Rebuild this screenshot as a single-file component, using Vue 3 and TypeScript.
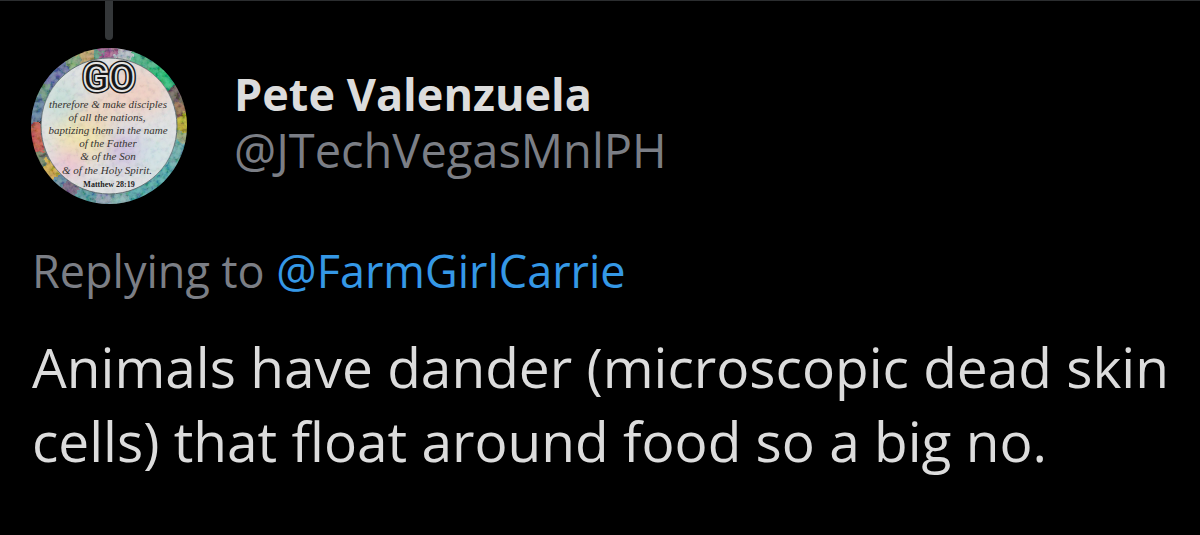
<script setup lang="ts">
interface Segment {
  from: number
  to: number
  color: string
}
interface Verse {
  y: number
  x: number
  text: string
}

const author = { name: 'Pete Valenzuela', handle: '@JTechVegasMnlPH' }
const replyTo = '@FarmGirlCarrie'
const body = 'Animals have dander (microscopic dead skin cells) that float around food so a big no.'

// Border colours of the avatar, in degrees clockwise from the top.
const segments: Segment[] = [
  { from: 0, to: 6, color: '#a9658f' },
  { from: 6, to: 18, color: '#aeb6bd' },
  { from: 18, to: 36, color: '#35a876' },
  { from: 36, to: 58, color: '#12b86c' },
  { from: 58, to: 72, color: '#65584e' },
  { from: 72, to: 82, color: '#8a6440' },
  { from: 82, to: 94, color: '#b5aa1d' },
  { from: 94, to: 104, color: '#8a9b6c' },
  { from: 104, to: 124, color: '#5aa3a3' },
  { from: 124, to: 165, color: '#3fa0a2' },
  { from: 165, to: 178, color: '#77aaa9' },
  { from: 178, to: 190, color: '#8297a9' },
  { from: 190, to: 206, color: '#4b9197' },
  { from: 206, to: 218, color: '#6b5876' },
  { from: 218, to: 226, color: '#5a8599' },
  { from: 226, to: 240, color: '#c9a438' },
  { from: 240, to: 250, color: '#6a785a' },
  { from: 250, to: 270, color: '#c24c3a' },
  { from: 270, to: 292, color: '#4f7294' },
  { from: 292, to: 303, color: '#5c8b76' },
  { from: 303, to: 325, color: '#5a679a' },
  { from: 325, to: 336, color: '#76a070' },
  { from: 336, to: 348, color: '#b8985c' },
  { from: 348, to: 354, color: '#4f9678' },
  { from: 354, to: 360, color: '#9d4e84' },
]

const verses: Verse[] = [
  { x: 77, y: 60, text: 'therefore & make disciples' },
  { x: 76, y: 73, text: 'of all the nations,' },
  { x: 77, y: 86, text: 'baptizing them in the name' },
  { x: 77, y: 99, text: 'of the Father' },
  { x: 77, y: 112, text: '& of the Son' },
  { x: 76, y: 126, text: '& of the Holy Spirit.' },
]
</script>

<template>
  <article class="post">
    <div class="thread" aria-hidden="true"></div>
    <header class="author">
      <a class="avatar" href="#" aria-label="Pete Valenzuela profile">
        <svg viewBox="0 0 156 156" role="img" aria-label="Matthew 28:19 verse">
          <defs>
            <clipPath id="disc"><circle cx="78" cy="78" r="78" /></clipPath>
            <filter id="rough" x="-10%" y="-10%" width="120%" height="120%">
              <feTurbulence type="fractalNoise" baseFrequency="0.14" numOctaves="3" seed="4" result="n" />
              <feDisplacementMap in="SourceGraphic" in2="n" scale="14" xChannelSelector="R" yChannelSelector="G" />
            </filter>
            <filter id="grain" x="0" y="0" width="100%" height="100%">
              <feTurbulence type="fractalNoise" baseFrequency="0.2" numOctaves="3" seed="9" />
              <feColorMatrix values="2.6 .6 0 0 -1.1  1.6 1.6 0 0 -1.1  1.6 .6 1 0 -1.1  0 0 0 0 1" />
            </filter>
            <filter id="wash"><feGaussianBlur stdDeviation="9" /></filter>
            <clipPath id="paper"><circle cx="78" cy="78" r="68" /></clipPath>
          </defs>
          <g clip-path="url(#disc)">
            <g filter="url(#rough)">
              <circle
                v-for="s in segments"
                :key="s.from"
                cx="78"
                cy="78"
                r="75"
                fill="none"
                stroke-width="26"
                :stroke="s.color"
                pathLength="360"
                :stroke-dasharray="`${s.to - s.from + 1} ${359 - s.to + s.from}`"
                :stroke-dashoffset="-s.from"
                transform="rotate(-90 78 78)"
              />
            </g>
            <rect width="156" height="156" filter="url(#grain)" opacity=".22" />
            <circle cx="78" cy="78" r="68" fill="#dfe1e2" stroke="#606e72" stroke-width="1" />
            <g clip-path="url(#paper)">
              <g filter="url(#wash)">
                <ellipse cx="104" cy="44" rx="34" ry="24" fill="#efd0c4" />
                <ellipse cx="52" cy="90" rx="28" ry="22" fill="#f1e5af" />
                <ellipse cx="94" cy="102" rx="20" ry="16" fill="#cdbce0" />
                <ellipse cx="38" cy="116" rx="18" ry="14" fill="#ecc2d1" />
                <ellipse cx="32" cy="54" rx="18" ry="20" fill="#c6ded8" />
                <ellipse cx="124" cy="108" rx="18" ry="20" fill="#d0e2e4" />
                <ellipse cx="66" cy="64" rx="20" ry="14" fill="#ecd3c0" />
              </g>
              <rect width="156" height="156" filter="url(#grain)" opacity=".05" />
            </g>
          </g>
          <text class="go go-edge" x="78" y="43">GO</text>
          <text class="go go-line" x="78" y="43">GO</text>
          <text v-for="v in verses" :key="v.y" class="verse" :x="v.x" :y="v.y">{{ v.text }}</text>
          <text class="source" x="78" y="139">Matthew 28:19</text>
        </svg>
      </a>
      <div class="names">
        <a class="name" href="#">{{ author.name }}</a>
        <a class="handle" href="#">{{ author.handle }}</a>
      </div>
    </header>
    <p class="reply">Replying to <a href="#">{{ replyTo }}</a></p>
    <p class="body">{{ body }}</p>
  </article>
</template>

<style>
body {
  margin: 0;
  background: #000;
}
</style>

<style scoped>
.post {
  box-sizing: border-box;
  min-height: 100vh;
  padding: 0 20px 40px 32px;
  border-top: 1px solid #2b2d2f;
  background: #000;
  color: #dcdcdc;
  font-family: "Open Sans", "Noto Sans", sans-serif;
}
.thread {
  width: 8px;
  height: 39px;
  margin-left: 73px;
  border-radius: 0 0 4px 4px;
  background: #343739;
}
.author {
  display: flex;
  gap: 47px;
  margin: 8px 0 0 -1px;
}
.avatar {
  flex: none;
  width: 156px;
  height: 156px;
}
.avatar svg {
  display: block;
  width: 100%;
  height: 100%;
}
.names {
  display: flex;
  flex-direction: column;
  padding-top: 18px;
}
.names a {
  line-height: 56px;
  text-decoration: none;
  white-space: nowrap;
}
.name {
  color: #dcdcdc;
  font-size: 45px;
  font-weight: 700;
}
.handle {
  color: #7b7e85;
  font-size: 47px;
}
.reply {
  margin: 39px 0 0;
  color: #7b7e85;
  font-size: 45px;
  line-height: 56px;
}
.reply a {
  color: #3598e6;
  text-decoration: none;
}
.body {
  margin: 31px 0 0;
  font-size: 55px;
  line-height: 74px;
}
.verse {
  fill: #35332f;
  font: italic 11px "Liberation Serif", serif;
  text-anchor: middle;
}
.source {
  fill: #222;
  font: bold 8px "Liberation Serif", serif;
  text-anchor: middle;
}
.go {
  font: bold 38px Roboto, sans-serif;
  text-anchor: middle;
  stroke-linejoin: round;
}
.go-edge {
  fill: #161616;
  stroke: #161616;
  stroke-width: 5px;
}
.go-line {
  fill: #161616;
  stroke: #e4e4e4;
  stroke-width: 2px;
}
</style>
